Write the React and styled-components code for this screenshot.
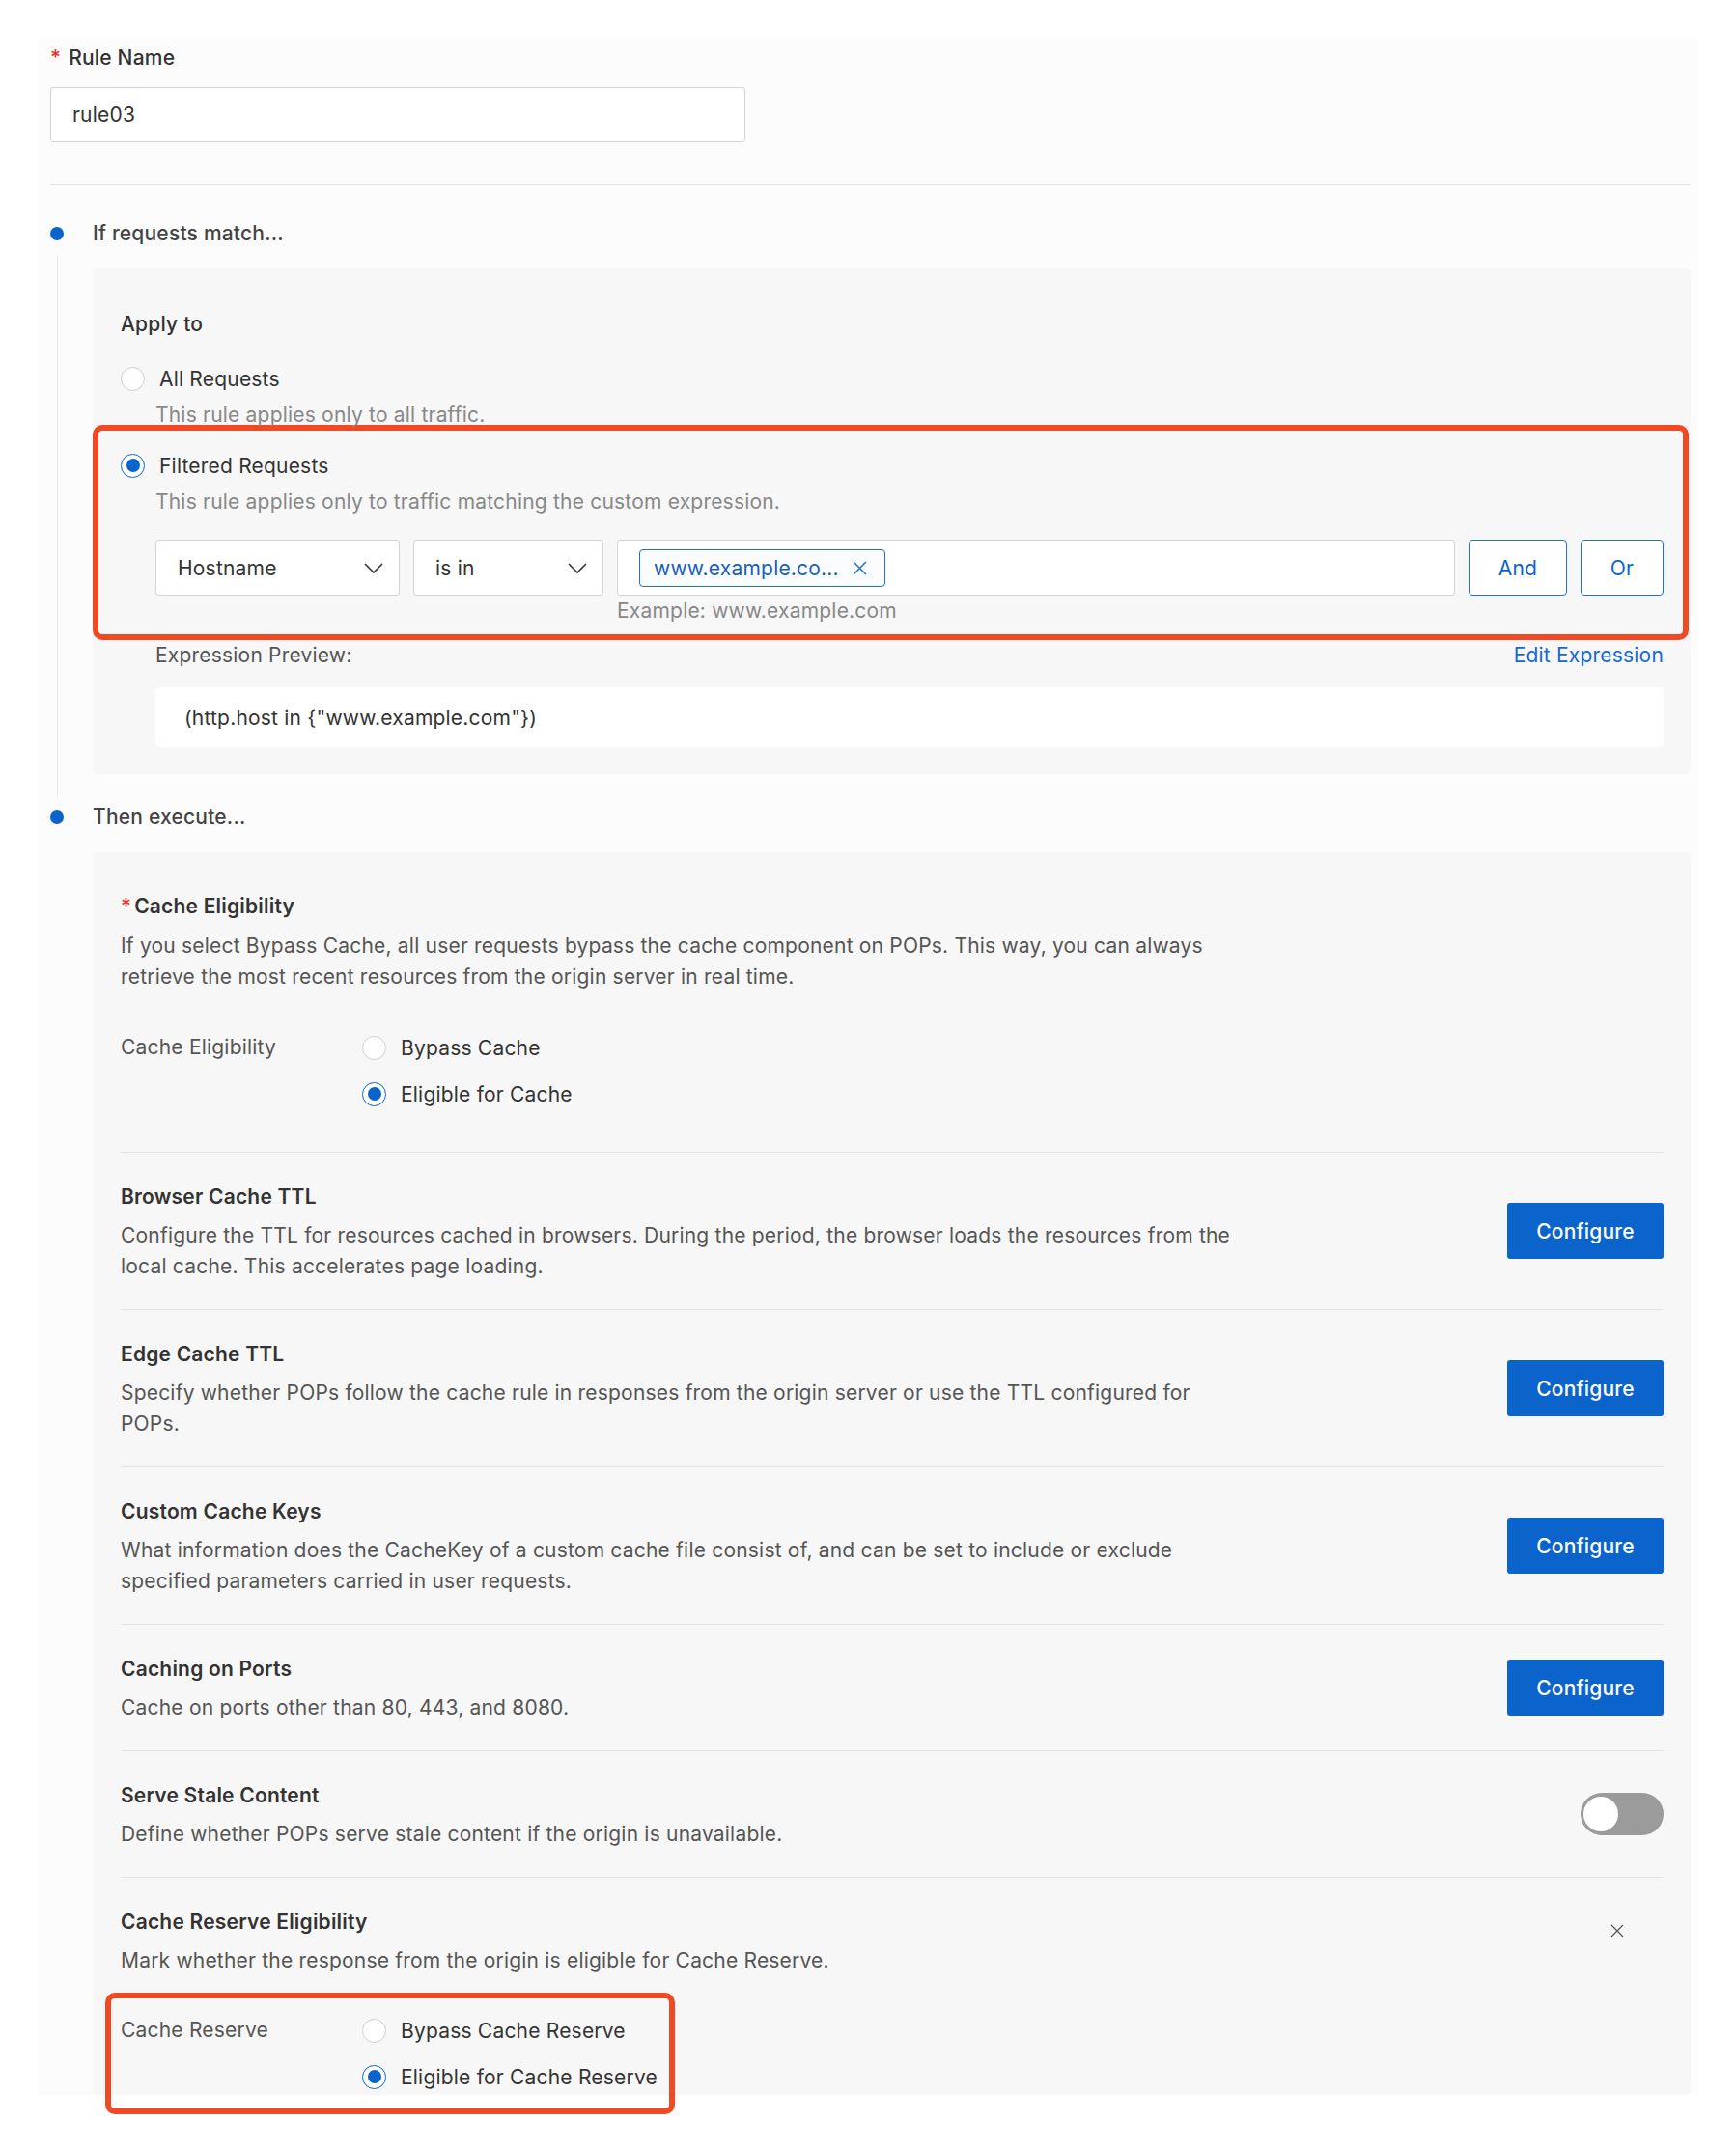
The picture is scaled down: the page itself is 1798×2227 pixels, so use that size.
import React from 'react';
import styled, { createGlobalStyle } from 'styled-components';

const BLUE = '#0b64cb';
const RED = '#f04a24';
const LINE = '#e3e3e3';

const GlobalStyle = createGlobalStyle`
  * { box-sizing: border-box; }
  body {
    margin: 0;
    padding-bottom: 60px;
    background: #fff;
    font-family: Inter, "Noto Sans", sans-serif;
    font-size: 21px;
    letter-spacing: 0.2px;
    color: #333;
  }
`;

const Card = styled.div`
  margin: 40px 39px 0 40px;
  padding: 6px 8px 0 12px;
  background: #fcfcfc;
`;

const FormLabel = styled.div`
  line-height: 28px;
  font-weight: 500;
  color: #333;

  span {
    color: #e5322d;
    margin-right: ${p => (p.$tight ? '3px' : '8px')};
  }

  b {
    font-weight: 600;
  }
`;

const TextInput = styled.input`
  display: block;
  width: 720px;
  height: 57px;
  margin-top: 16px;
  padding: 0 22px;
  border: 1px solid #d2d2d2;
  border-radius: 3px;
  background: #fff;
  font: inherit;
  letter-spacing: inherit;
  color: #333;
  outline: none;
`;

const Divider = styled.div`
  margin-top: ${p => p.$top || 0}px;
  border-top: 1px solid ${LINE};
`;

const StepHeader = styled.div`
  display: flex;
  align-items: center;
  height: 28px;
  margin-top: ${p => p.$top}px;
`;

const Dot = styled.span`
  width: 14px;
  height: 14px;
  border-radius: 50%;
  background: ${BLUE};
  margin-right: 30px;
`;

const StepTitle = styled.div`
  font-weight: 500;
  color: #444;
  line-height: 28px;
`;

const StepBody = styled.div`
  margin: 8px 0 0 7px;
  border-left: 1px solid ${p => (p.$line ? '#e6e6e6' : 'transparent')};
  padding: 14px 0 ${p => p.$bottom}px 36px;
`;

const Panel = styled.div`
  display: flow-root;
  background: #f7f7f7;
  border-radius: 6px;
  padding: ${p => p.$top}px 28px ${p => p.$bottom}px 29px;
`;

const SubTitle = styled.div`
  font-weight: 500;
  line-height: 28px;
  color: #333;
`;

const RadioRow = styled.label`
  display: flex;
  align-items: center;
  gap: 15px;
  height: 28px;
  margin-top: ${p => p.$top || 0}px;
  color: #333;
  white-space: nowrap;
`;

const RadioCircle = styled.span`
  position: relative;
  flex: none;
  width: 25px;
  height: 25px;
  border-radius: 50%;
  background: #fff;
  border: ${p => (p.$checked ? `1.5px solid ${BLUE}` : '1px solid #cfcfcf')};

  &::after {
    content: '';
    display: ${p => (p.$checked ? 'block' : 'none')};
    position: absolute;
    top: 50%;
    left: 50%;
    width: 14px;
    height: 14px;
    margin: -7px 0 0 -7px;
    border-radius: 50%;
    background: ${BLUE};
  }
`;

const Hint = styled.div`
  margin-top: ${p => p.$top || 0}px;
  padding-left: ${p => (p.$indent ? 36 : 0)}px;
  line-height: 28px;
  color: #888;
  white-space: nowrap;
`;

const Annotation = styled.div`
  border: 6px solid ${RED};
  border-radius: 10px;
`;

const FilterFrame = styled(Annotation)`
  margin: -4px -26px 0 -29px;
  padding: 22px 20px 10px 23px;
`;

const FilterRow = styled.div`
  display: flex;
  align-items: flex-start;
  gap: 14px;
  margin-top: 25px;
  padding-left: 36px;
`;

const Select = styled.div`
  display: flex;
  align-items: center;
  justify-content: space-between;
  width: ${p => p.$width}px;
  height: 58px;
  padding: 0 16px 0 22px;
  background: #fff;
  border: 1px solid #d4d4d4;
  border-radius: 3px;
  color: #333;
`;

const ValueCol = styled.div`
  flex: 1;
`;

const ValueBox = styled.div`
  display: flex;
  align-items: center;
  height: 58px;
  padding-left: 22px;
  background: #fff;
  border: 1px solid #d4d4d4;
  border-radius: 3px;
`;

const Tag = styled.span`
  display: inline-flex;
  align-items: center;
  justify-content: space-between;
  width: 255px;
  height: 39px;
  padding: 0 18px 0 14px;
  background: #fafcff;
  border: 1px solid #1f6fd0;
  border-radius: 4px;
  color: #1b5fb9;
  white-space: nowrap;
`;

const OutlineButton = styled.button`
  width: ${p => p.$width}px;
  height: 58px;
  background: #fff;
  border: 1px solid #2370d2;
  border-radius: 4px;
  color: ${BLUE};
  font: inherit;
  letter-spacing: inherit;
`;

const PreviewHeader = styled.div`
  display: flex;
  justify-content: space-between;
  margin-top: 2px;
  padding-left: 36px;
  line-height: 28px;
  color: #555;
`;

const Link = styled.a`
  color: #1768d1;
  text-decoration: none;
`;

const PreviewBox = styled.div`
  display: flex;
  align-items: center;
  height: 62px;
  margin: 19px 0 0 36px;
  padding-left: 30px;
  background: #fff;
  border-radius: 4px;
  color: #333;
`;

const Desc = styled.div`
  margin-top: ${p => p.$top || 10}px;
  line-height: 32px;
  color: #555;
  white-space: nowrap;
`;

const FieldRow = styled.div`
  display: flex;
  align-items: flex-start;
  margin-top: ${p => p.$top || 0}px;
`;

const FieldLabel = styled.div`
  width: 250px;
  flex: none;
  line-height: 28px;
  color: #555;
`;

const RadioGroup = styled.div`
  display: flex;
  flex-direction: column;
  gap: 20px;
`;

const SettingRow = styled.div`
  display: flex;
  align-items: center;
  justify-content: space-between;
  padding: 32px 0 ${p => (p.$last ? 0 : 28)}px;
  border-bottom: ${p => (p.$last ? 'none' : `1px solid ${LINE}`)};
`;

const SettingTitle = styled.div`
  font-weight: 600;
  line-height: 28px;
  color: #333;
`;

const PrimaryButton = styled.button`
  width: 162px;
  height: 58px;
  flex: none;
  margin-bottom: 4px;
  background: ${BLUE};
  border: none;
  border-radius: 3px;
  color: #fff;
  font: inherit;
  font-weight: 500;
  letter-spacing: inherit;
`;

const Toggle = styled.span`
  position: relative;
  flex: none;
  width: 86px;
  height: 44px;
  margin-bottom: 4px;
  border-radius: 22px;
  background: #9b9b9b;

  &::after {
    content: '';
    position: absolute;
    top: 4px;
    left: 3px;
    width: 36px;
    height: 36px;
    border-radius: 50%;
    background: #fff;
  }
`;

const CloseSlot = styled.span`
  display: flex;
  padding-right: 41px;
  margin-bottom: 24px;
  color: #555;
`;

const ReserveFrame = styled(Annotation)`
  width: 590px;
  margin: 17px 0 -20px -16px;
  padding: 19px 10px;
`;

const Chevron = () => (
  <svg width="20" height="11" viewBox="0 0 20 11" fill="none">
    <polyline points="1,1 10,10 19,1" stroke="#333" strokeWidth="1.6" />
  </svg>
);

const Cross = ({ size, color, width = 1.4 }) => (
  <svg width={size} height={size} viewBox="0 0 14 14" fill="none">
    <path d="M1 1 L13 13 M13 1 L1 13" stroke={color} strokeWidth={width} />
  </svg>
);

const Radio = ({ checked, children, top }) => (
  <RadioRow $top={top}>
    <RadioCircle $checked={checked} />
    {children}
  </RadioRow>
);

const settings = [
  {
    title: 'Browser Cache TTL',
    lines: [
      'Configure the TTL for resources cached in browsers. During the period, the browser loads the resources from the',
      'local cache. This accelerates page loading.',
    ],
    action: 'configure',
  },
  {
    title: 'Edge Cache TTL',
    lines: [
      'Specify whether POPs follow the cache rule in responses from the origin server or use the TTL configured for',
      'POPs.',
    ],
    action: 'configure',
  },
  {
    title: 'Custom Cache Keys',
    lines: [
      'What information does the CacheKey of a custom cache file consist of, and can be set to include or exclude',
      'specified parameters carried in user requests.',
    ],
    action: 'configure',
  },
  {
    title: 'Caching on Ports',
    lines: ['Cache on ports other than 80, 443, and 8080.'],
    action: 'configure',
  },
  {
    title: 'Serve Stale Content',
    lines: ['Define whether POPs serve stale content if the origin is unavailable.'],
    action: 'toggle',
  },
];

const Lines = ({ lines }) =>
  lines.map((l, i) => (
    <React.Fragment key={i}>
      {i > 0 && <br />}
      {l}
    </React.Fragment>
  ));

const App = () => {
  return (
    <>
      <GlobalStyle />
      <Card>
        <FormLabel>
          <span>*</span>Rule Name
        </FormLabel>
        <TextInput defaultValue="rule03" readOnly />
        <Divider $top={44} />

        <StepHeader $top={36}>
          <Dot />
          <StepTitle>If requests match...</StepTitle>
        </StepHeader>
        <StepBody $line $bottom={24}>
          <Panel $top={44} $bottom={28}>
            <SubTitle>Apply to</SubTitle>
            <Radio top={28}>All Requests</Radio>
            <Hint $indent $top={10}>This rule applies only to all traffic.</Hint>

            <FilterFrame>
              <Radio checked>Filtered Requests</Radio>
              <Hint $indent $top={10}>
                This rule applies only to traffic matching the custom expression.
              </Hint>
              <FilterRow>
                <Select $width={253}>
                  Hostname
                  <Chevron />
                </Select>
                <Select $width={197}>
                  is in
                  <Chevron />
                </Select>
                <ValueCol>
                  <ValueBox>
                    <Tag>
                      www.example.co...
                      <Cross size={15} color="#1f6fd0" />
                    </Tag>
                  </ValueBox>
                  <Hint $top={2}>Example: www.example.com</Hint>
                </ValueCol>
                <OutlineButton $width={102}>And</OutlineButton>
                <OutlineButton $width={86}>Or</OutlineButton>
              </FilterRow>
            </FilterFrame>

            <PreviewHeader>
              <span>Expression Preview:</span>
              <Link href="#">Edit Expression</Link>
            </PreviewHeader>
            <PreviewBox>(http.host in {'{"www.example.com"}'})</PreviewBox>
          </Panel>
        </StepBody>

        <StepHeader $top={6}>
          <Dot />
          <StepTitle>Then execute...</StepTitle>
        </StepHeader>
        <StepBody $bottom={0}>
          <Panel $top={43} $bottom={0}>
            <FormLabel $tight>
              <span>*</span>
              <b>Cache Eligibility</b>
            </FormLabel>
            <Desc $top={11}>
              If you select Bypass Cache, all user requests bypass the cache component on POPs. This way, you can always
              <br />
              retrieve the most recent resources from the origin server in real time.
            </Desc>
            <FieldRow $top={43}>
              <FieldLabel>Cache Eligibility</FieldLabel>
              <RadioGroup>
                <Radio>Bypass Cache</Radio>
                <Radio checked>Eligible for Cache</Radio>
              </RadioGroup>
            </FieldRow>
            <Divider $top={46} />

            {settings.map(s => (
              <SettingRow key={s.title}>
                <div>
                  <SettingTitle>{s.title}</SettingTitle>
                  <Desc>
                    <Lines lines={s.lines} />
                  </Desc>
                </div>
                {s.action === 'configure' ? <PrimaryButton>Configure</PrimaryButton> : <Toggle />}
              </SettingRow>
            ))}

            <SettingRow $last>
              <div>
                <SettingTitle>Cache Reserve Eligibility</SettingTitle>
                <Desc>Mark whether the response from the origin is eligible for Cache Reserve.</Desc>
              </div>
              <CloseSlot>
                <Cross size={14} color="#555" width={1.2} />
              </CloseSlot>
            </SettingRow>
            <ReserveFrame>
              <FieldRow>
                <FieldLabel>Cache Reserve</FieldLabel>
                <RadioGroup>
                  <Radio>Bypass Cache Reserve</Radio>
                  <Radio checked>Eligible for Cache Reserve</Radio>
                </RadioGroup>
              </FieldRow>
            </ReserveFrame>
          </Panel>
        </StepBody>
      </Card>
    </>
  );
};

export default App;
